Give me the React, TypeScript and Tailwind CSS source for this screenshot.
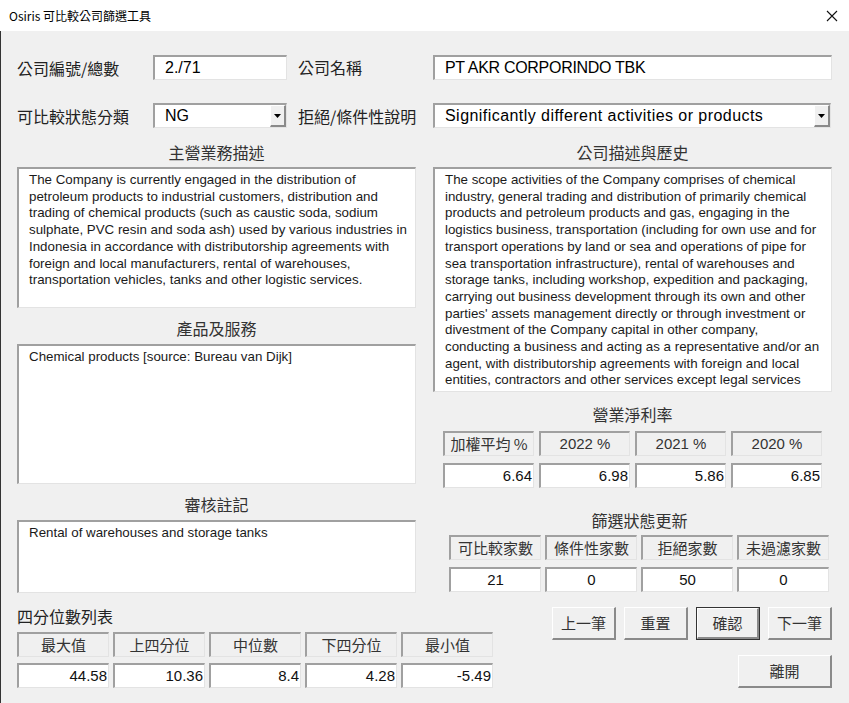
import React from "react";

const sunken =
  "border-t-2 border-l-2 border-r border-b border-t-[#a0a0a0] border-l-[#a0a0a0] border-r-[#e3e3e3] border-b-[#e3e3e3]";
const raised =
  "border-t border-l border-r-2 border-b-2 border-t-[#ffffff] border-l-[#ffffff] border-r-[#8a8a8a] border-b-[#8a8a8a]";
const cjk = "font-['Noto_Sans_CJK_TC','Liberation_Sans',sans-serif]";
const latin = "font-['Liberation_Sans','Noto_Sans_CJK_TC',sans-serif]";

const leftMain = [
  "The Company is currently engaged in the distribution of",
  "petroleum products to industrial customers, distribution and",
  "trading of chemical products (such as caustic soda, sodium",
  "sulphate, PVC resin and soda ash) used by various industries in",
  "Indonesia in accordance with distributorship agreements with",
  "foreign and local manufacturers, rental of warehouses,",
  "transportation vehicles, tanks and other logistic services.",
];

const rightMain = [
  "The scope activities of the Company comprises of chemical",
  "industry, general trading and distribution of primarily chemical",
  "products and petroleum products and gas, engaging in the",
  "logistics business, transportation (including for own use and for",
  "transport operations by land or sea and operations of pipe for",
  "sea transportation infrastructure), rental of warehouses and",
  "storage tanks, including workshop, expedition and packaging,",
  "carrying out business development through its own and other",
  "parties' assets management directly or through investment or",
  "divestment of the Company capital in other company,",
  "conducting a business and acting as a representative and/or an",
  "agent, with distributorship agreements with foreign and local",
  "entities, contractors and other services except legal services",
];

function TextArea({ lines, h }: { lines: string[]; h: string }) {
  return (
    <div className={`bg-white ${sunken} ${h} pl-[10px] pt-[3px] overflow-hidden ${latin} text-[13.33px] leading-[16.7px] text-[#1a1a1a]`}>
      {lines.map((l, i) => (
        <div key={i} className="whitespace-nowrap">
          {l}
        </div>
      ))}
    </div>
  );
}

function Heading({ children, className = "" }: { children: React.ReactNode; className?: string }) {
  return (
    <div className={`h-[22px] leading-[22px] text-center text-[16px] text-[#333] ${cjk} ${className}`}>
      {children}
    </div>
  );
}

function ComboArrow() {
  return (
    <div className={`w-[16px] h-full bg-[#f0f0f0] ${raised} flex items-center justify-center`}>
      <svg width="7" height="4" viewBox="0 0 7 4">
        <polygon points="0,0 7,0 3.5,4" fill="#000" />
      </svg>
    </div>
  );
}

function HeaderCell({ children, w }: { children: React.ReactNode; w: string }) {
  return (
    <div className={`${w} h-[25px] bg-[#f0f0f0] ${sunken} flex items-center justify-center text-[15px] text-[#333] ${latin}`}>
      {children}
    </div>
  );
}

function ValueCell({ children, w, align = "right" }: { children: React.ReactNode; w: string; align?: "right" | "center" }) {
  return (
    <div
      className={`${w} h-[25px] bg-white ${sunken} flex items-center ${
        align === "right" ? "justify-end pr-[1px]" : "justify-center"
      } text-[15px] text-[#111] ${latin}`}
    >
      {children}
    </div>
  );
}

function Button({ children, def = false, w = "w-[64px]" }: { children: React.ReactNode; def?: boolean; w?: string }) {
  const inner = (
    <div className={`${def ? "w-full h-full" : `${w} h-[33px]`} bg-[#f0f0f0] ${raised} flex items-center justify-center text-[15px] text-[#333] ${cjk}`}>
      {children}
    </div>
  );
  if (def)
    return <div className={`${w} h-[33px] border border-[#333]`}>{inner}</div>;
  return inner;
}

export default function App() {
  return (
    <div className={`w-[849px] h-[703px] overflow-hidden bg-[#f0f0f0] flex flex-col ${latin}`}>
      {/* Title bar */}
      <div className="h-[31px] bg-white flex items-center justify-between pl-[9px] pr-[11px] shrink-0">
        <span className={`text-[12px] text-black ${cjk}`}>Osiris 可比較公司篩選工具</span>
        <svg width="12" height="12" viewBox="0 0 12 12">
          <path d="M1 1 L11 11 M11 1 L1 11" stroke="#111" strokeWidth="1.1" />
        </svg>
      </div>

      {/* Body */}
      <div className="flex-1 border-l border-l-[#333] pl-[16px] pr-[17px] pt-[24px]">
        {/* Row 1 */}
        <div className="flex items-center h-[25px]">
          <div className={`w-[136px] text-[16px] text-[#222] ${cjk}`}>公司編號/總數</div>
          <div className={`w-[134px] h-[25px] bg-white ${sunken} flex items-center pl-[10px] text-[16px] text-black`}>2./71</div>
          <div className={`ml-[11px] w-[135px] text-[16px] text-[#222] ${cjk} -mt-[2px]`}>公司名稱</div>
          <div className={`flex-1 h-[25px] bg-white ${sunken} flex items-center pl-[10px] text-[16px] text-black tracking-[-0.3px]`}>
            PT AKR CORPORINDO TBK
          </div>
        </div>
        {/* Row 2 */}
        <div className="flex items-center h-[25px] mt-[23px]">
          <div className={`w-[136px] text-[16px] text-[#222] ${cjk}`}>可比較狀態分類</div>
          <div className={`w-[134px] h-[25px] bg-white ${sunken} flex items-center justify-between`}>
            <span className="pl-[10px] text-[16px] text-black">NG</span>
            <ComboArrow />
          </div>
          <div className={`ml-[11px] w-[135px] text-[16px] text-[#222] ${cjk}`}>拒絕/條件性說明</div>
          <div className={`flex-1 h-[25px] mr-[1px] bg-white ${sunken} flex items-center justify-between`}>
            <span className="pl-[10px] text-[16px] text-black tracking-[0.45px] whitespace-nowrap">
              Significantly different activities or products
            </span>
            <ComboArrow />
          </div>
        </div>

        {/* Columns */}
        <div className="flex gap-[17px]">
          {/* Left column */}
          <div className="w-[399px] flex flex-col">
            <Heading className="mt-[13px]">主營業務描述</Heading>
            <div className="mt-[4px]">
              <TextArea lines={leftMain} h="h-[141px]" />
            </div>
            <Heading className="mt-[9px]">產品及服務</Heading>
            <div className="mt-[5px]">
              <TextArea lines={["Chemical products [source: Bureau van Dijk]"]} h="h-[140px]" />
            </div>
            <Heading className="mt-[9px]">審核註記</Heading>
            <div className="mt-[5px]">
              <TextArea lines={["Rental of warehouses and storage tanks"]} h="h-[73px]" />
            </div>
          </div>

          {/* Right column */}
          <div className="w-[399px] flex flex-col">
            <Heading className="mt-[13px]">公司描述與歷史</Heading>
            <div className="mt-[4px]">
              <TextArea lines={rightMain} h="h-[225px]" />
            </div>
            <Heading className="mt-[11px]">營業淨利率</Heading>
            <div className="mt-[6px] pl-[10px] flex gap-[5px]">
              <HeaderCell w="w-[91px]"><span className={cjk}>加權平均 %</span></HeaderCell>
              <HeaderCell w="w-[91px]">2022 %</HeaderCell>
              <HeaderCell w="w-[91px]">2021 %</HeaderCell>
              <HeaderCell w="w-[91px]">2020 %</HeaderCell>
            </div>
            <div className="mt-[7px] pl-[10px] flex gap-[5px]">
              <ValueCell w="w-[91px]">6.64</ValueCell>
              <ValueCell w="w-[91px]">6.98</ValueCell>
              <ValueCell w="w-[91px]">5.86</ValueCell>
              <ValueCell w="w-[91px]">6.85</ValueCell>
            </div>
            <Heading className="mt-[21px] pl-[14px]">篩選狀態更新</Heading>
            <div className="mt-[4px] pl-[16px] flex gap-[4px]">
              {["可比較家數", "條件性家數", "拒絕家數", "未過濾家數"].map((t) => (
                <HeaderCell key={t} w="w-[92px]"><span className={cjk}>{t}</span></HeaderCell>
              ))}
            </div>
            <div className="mt-[7px] pl-[16px] flex gap-[4px]">
              {["21", "0", "50", "0"].map((t, i) => (
                <ValueCell key={i} w="w-[92px]" align="center">{t}</ValueCell>
              ))}
            </div>
          </div>
        </div>

        {/* Bottom row */}
        <div className="flex justify-between">
          <div className="flex flex-col">
            <div className={`mt-[12px] h-[22px] leading-[22px] text-[16px] text-[#222] ${cjk}`}>四分位數列表</div>
            <div className="mt-[5px] flex gap-[4px]">
              {["最大值", "上四分位", "中位數", "下四分位", "最小值"].map((t) => (
                <HeaderCell key={t} w="w-[92px]"><span className={cjk}>{t}</span></HeaderCell>
              ))}
            </div>
            <div className="mt-[6px] flex gap-[4px]">
              {["44.58", "10.36", "8.4", "4.28", "-5.49"].map((t, i) => (
                <ValueCell key={i} w="w-[92px]">{t}</ValueCell>
              ))}
            </div>
          </div>
          <div className="flex flex-col items-end pt-[14px]">
            <div className="flex gap-[8px]">
              <Button>上一筆</Button>
              <Button>重置</Button>
              <Button def>確認</Button>
              <Button>下一筆</Button>
            </div>
            <div className="mt-[15px]">
              <Button w="w-[94px]">離開</Button>
            </div>
          </div>
        </div>
      </div>
    </div>
  );
}
